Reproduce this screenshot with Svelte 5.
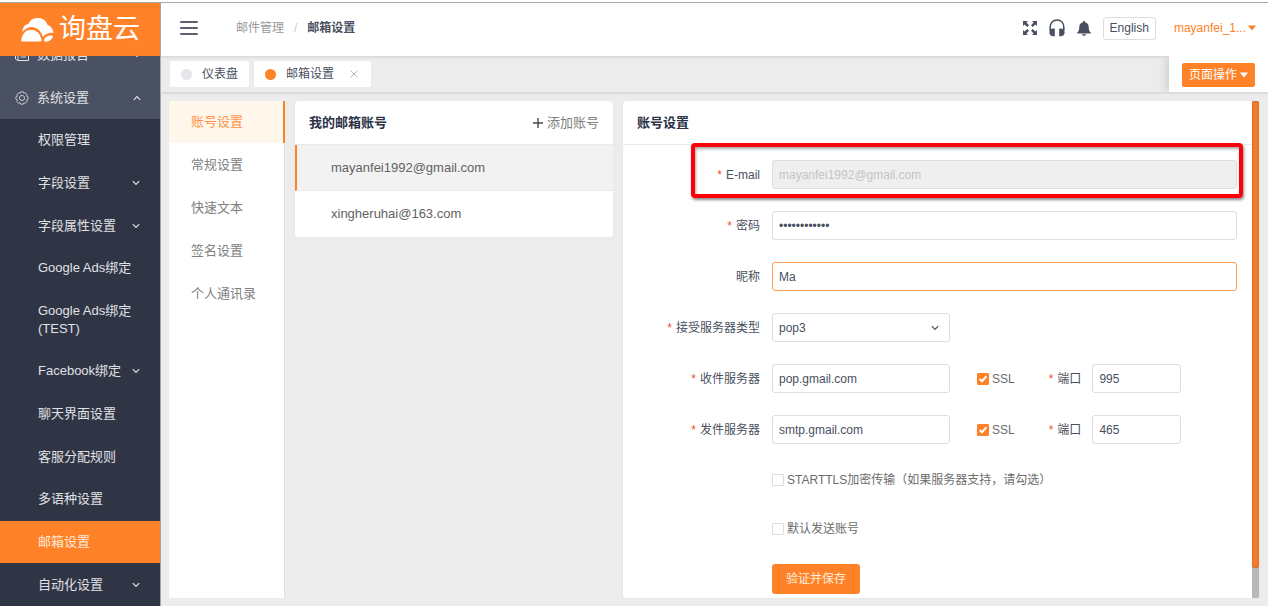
<script>
  const settingsMenu = [
    { label: '权限管理' },
    { label: '字段设置', expandable: true },
    { label: '字段属性设置', expandable: true },
    { label: 'Google Ads绑定' },
    { label: 'Google Ads绑定 (TEST)', tall: true },
    { label: 'Facebook绑定', expandable: true },
    { label: '聊天界面设置' },
    { label: '客服分配规则' },
    { label: '多语种设置' },
    { label: '邮箱设置', active: true },
    { label: '自动化设置', expandable: true },
  ];
  const sections = ['账号设置', '常规设置', '快速文本', '签名设置', '个人通讯录'];
  const accounts = ['mayanfei1992@gmail.com', 'xingheruhai@163.com'];

  let password = $state('abcdefghijkl');
  let nickname = $state('Ma');
  let protocol = $state('pop3');
  let servers = $state([
    { id: 'incoming', label: '收件服务器', host: 'pop.gmail.com', ssl: true, port: '995' },
    { id: 'outgoing', label: '发件服务器', host: 'smtp.gmail.com', ssl: true, port: '465' },
  ]);
  let starttls = $state(false);
  let isDefault = $state(false);
</script>

{#snippet chevron(up)}
  <svg class="chevron" class:up width="8" height="6" viewBox="0 0 8 6" aria-hidden="true">
    <path d="M.8 1.200 4 4.400 7.200 1.200" fill="none" stroke="currentColor" stroke-width="1.200" />
  </svg>
{/snippet}

{#snippet caret()}
  <svg width="8" height="6" viewBox="0 0 8 6" aria-hidden="true"><path d="M0 .5h8L4 5.5z" fill="currentColor" /></svg>
{/snippet}

<div class="page">
  <aside>
    <a class="logo" href="#home">
      <svg width="33" height="24" viewBox="0 0 33 24" aria-hidden="true">
        <path d="M1.500 14C1.500 9 4 6.500 7.500 6 9 2 12.500 0 17 0c5 0 8.500 3 9.500 7 3.500 1 5.500 4 6 8-4-.6-8 .8-10.500 4C20 12.500 15.500 9 10.500 9 7 9 4 11 1.500 14z" fill="#fff" />
        <path d="M1.500 23.500C0 23.500 0 22 .5 20.500 2 15 5.500 11.800 10 11.800c5.500 0 9.500 4.200 10.500 10 .2 1.200-.3 1.700-1.500 1.700z" fill="#fff" />
        <path d="M23 22.500c.5-3.500 4-5.500 9-5-.8 4-3.500 6-7 6-1.500 0-2.100-.2-2-1z" fill="#fff" />
      </svg>
      <span>询盘云</span>
    </a>
    <nav class="top-menu">
      <a class="group" href="#report">
        <svg width="14" height="14" viewBox="0 0 14 14" fill="none" stroke="currentColor" aria-hidden="true">
          <path d="M3 1.500h10.500v11H2.500L.5 11V5H3zM3 5v7M5.500 5h5.500M5.500 9h5.500" />
        </svg>
        <span>数据报告</span>
        {@render chevron(false)}
      </a>
      <a class="group" href="#system">
        <svg width="14" height="14" viewBox="0 0 14 14" fill="none" stroke="currentColor" stroke-width=".8" aria-hidden="true">
          <path d="M5.700.8h2.600l.5 1.500 1.600-.5 1.700 1.800-.6 1.500 1.600.8v2.300l-1.600.8.6 1.500-1.700 1.800-1.600-.5-.5 1.400H5.700l-.5-1.400-1.600.5-1.700-1.800.6-1.500L.9 8.200V5.900l1.600-.8-.6-1.500 1.700-1.800 1.600.5z" />
          <circle cx="7" cy="7" r="2.600" />
        </svg>
        <span>系统设置</span>
        {@render chevron(true)}
      </a>
    </nav>
    <nav class="sub-menu">
      {#each settingsMenu as item}
        <a href="#menu" class:active={item.active} class:tall={item.tall}>
          <span>{item.label}</span>
          {#if item.expandable}{@render chevron(false)}{/if}
        </a>
      {/each}
    </nav>
  </aside>

  <div class="main">
    <header>
      <button class="burger" aria-label="菜单"><i></i><i></i><i></i></button>
      <div class="crumbs">
        <a href="#mail">邮件管理</a><em>/</em><strong>邮箱设置</strong>
      </div>
      <div class="tools">
        <button class="icon" aria-label="全屏">
          <svg width="14" height="14" viewBox="0 0 14 14" fill="currentColor" aria-hidden="true">
            <path d="M0 0h5L3.400 1.600 6 4.200 4.200 6 1.600 3.400 0 5zM14 0v5l-1.600-1.600L9.800 6 8 4.200l2.600-2.600L9 0zM0 14V9l1.600 1.600L4.200 8 6 9.800l-2.600 2.600L5 14zM14 14H9l1.600-1.600L8 9.800 9.800 8l2.600 2.600L14 9z" />
          </svg>
        </button>
        <button class="icon" aria-label="客服">
          <svg width="16" height="18" viewBox="0 0 16 18" aria-hidden="true">
            <path d="M1.200 12V8.500C1.200 4 4 1 8 1s6.800 3 6.800 7.500V12" fill="none" stroke="currentColor" stroke-width="1.600" />
            <path d="M5.800 9.500v7.800H4.200C2 17.300.4 15.500.4 13.400S2 9.500 4.200 9.500zM10.200 9.500v7.800h1.600c2.200 0 3.800-1.800 3.800-3.900s-1.600-3.900-3.800-3.900z" fill="currentColor" />
          </svg>
        </button>
        <button class="icon" aria-label="通知">
          <svg width="14" height="15" viewBox="0 0 14 15" fill="currentColor" aria-hidden="true">
            <path d="M7 0c.7 0 1.100.5 1.100 1.200C10.500 1.800 11.700 3.500 11.700 6c0 3 .8 4.500 2.100 5.600V12.500H.2v-.9C1.500 10.500 2.300 9 2.300 6c0-2.500 1.200-4.200 3.600-4.800C5.900.5 6.300 0 7 0zM5 13.200h4c-.2 1.100-1 1.600-2 1.600s-1.800-.5-2-1.600z" />
          </svg>
        </button>
        <button class="lang">English</button>
        <button class="user">mayanfei_1...{@render caret()}</button>
      </div>
    </header>

    <div class="tabs">
      <a class="tab" href="#dashboard"><i class="dot"></i>仪表盘</a>
      <a class="tab" href="#mail-settings">
        <i class="dot on"></i>邮箱设置
        <svg class="close" width="8" height="8" viewBox="0 0 8 8" aria-hidden="true"><path d="M.7.7l6.600 6.600M7.300.7.7 7.300" stroke="#b4b6bb" /></svg>
      </a>
      <div class="page-action"><button>页面操作{@render caret()}</button></div>
    </div>

    <main>
      <nav class="sections">
        {#each sections as name, i}
          <a href="#section" class:active={i === 0}>{name}</a>
        {/each}
      </nav>

      <section class="card accounts">
        <div class="card-head">
          <h2>我的邮箱账号</h2>
          <button class="add">
            <svg width="10" height="10" viewBox="0 0 10 10" aria-hidden="true"><path d="M5 0v10M0 5h10" stroke="#4a4a4a" stroke-width="1.400" /></svg>
            添加账号
          </button>
        </div>
        {#each accounts as account, i}
          <a href="#account" class="account" class:active={i === 0}>{account}</a>
        {/each}
      </section>

      <section class="card settings">
        <div class="body">
          <div class="card-head"><h2>账号设置</h2></div>
          <form onsubmit={(e) => e.preventDefault()}>
            <div class="row">
              <label class="req" for="email">E-mail</label>
              <input id="email" type="text" value="mayanfei1992@gmail.com" disabled />
              <div class="highlight"></div>
            </div>
            <div class="row">
              <label class="req" for="password">密码</label>
              <input id="password" type="password" bind:value={password} />
            </div>
            <div class="row">
              <label for="nickname">昵称</label>
              <input id="nickname" class="focused" type="text" bind:value={nickname} />
            </div>
            <div class="row">
              <label class="req" for="protocol">接受服务器类型</label>
              <div class="select">
                <select id="protocol" bind:value={protocol}>
                  <option>pop3</option>
                  <option>imap</option>
                </select>
                {@render chevron(false)}
              </div>
            </div>
            {#each servers as server}
              <div class="row">
                <label class="req" for={server.id}>{server.label}</label>
                <div class="server">
                  <input class="host" id={server.id} type="text" bind:value={server.host} />
                  <label class="check">
                    <span class="box">
                      <input type="checkbox" bind:checked={server.ssl} />
                      <svg width="12" height="12" viewBox="0 0 12 12" aria-hidden="true"><path d="M2.800 6 5 8.200 9.300 3.400" fill="none" stroke="#fff" stroke-width="2" /></svg>
                    </span>
                    SSL
                  </label>
                  <label class="req port-label" for="{server.id}-port">端口</label>
                  <input class="port" id="{server.id}-port" type="text" bind:value={server.port} />
                </div>
              </div>
            {/each}
            <div class="row option">
              <label class="check">
                <span class="box"><input type="checkbox" bind:checked={starttls} /></span>
                STARTTLS加密传输（如果服务器支持，请勾选）
              </label>
            </div>
            <div class="row option">
              <label class="check">
                <span class="box"><input type="checkbox" bind:checked={isDefault} /></span>
                默认发送账号
              </label>
            </div>
            <div class="row option"><button class="save">验证并保存</button></div>
          </form>
        </div>
        <div class="scrollbar"><i></i></div>
      </section>
    </main>
  </div>
</div>

<style>
  :global(body) {
    margin: 0;
  }
  .page,
  .page * {
    box-sizing: border-box;
  }
  .page {
    display: flex;
    min-height: calc(100vh - 2px);
    margin-top: 2px;
    border-top: 1px solid #a9a9ab;
    background: #ececec;
    color: #495060;
    font: 12px/18px 'Liberation Sans', 'Noto Sans CJK SC', sans-serif;
  }
  a {
    color: inherit;
    text-decoration: none;
  }
  button,
  input,
  select {
    font: inherit;
    color: inherit;
  }
  button {
    display: flex;
    align-items: center;
    padding: 0;
    border: 0;
    background: none;
    cursor: pointer;
  }
  svg {
    flex: none;
  }
  .chevron.up {
    transform: scaleY(-1);
  }

  aside {
    display: flex;
    flex: none;
    flex-direction: column;
    width: 161px;
    border-right: 1px solid #a3a5aa;
    background: #2f3545;
    color: #e0e1e5;
    font-size: 13px;
  }
  .logo {
    position: relative;
    z-index: 1;
    display: flex;
    align-items: center;
    gap: 5px;
    height: 53px;
    padding-left: 21px;
    background: #ff8229;
    color: #fff;
    font-size: 27px;
    line-height: 53px;
  }
  .top-menu {
    margin-top: -23px;
    background: #4a5163;
  }
  .group {
    display: flex;
    align-items: center;
    height: 43px;
    padding: 0 19px 0 15px;
  }
  .group span {
    flex: 1;
    margin-left: 8px;
  }
  .sub-menu {
    display: flex;
    flex: 1;
    flex-direction: column;
  }
  .sub-menu a {
    display: flex;
    flex: 1 0 42px;
    align-items: center;
    justify-content: space-between;
    padding: 0 20px 0 38px;
  }
  .sub-menu .tall {
    flex: none;
    height: 60px;
  }
  .sub-menu .active {
    background: #ff8229;
    color: #ffeada;
  }

  .main {
    display: flex;
    flex: 1;
    flex-direction: column;
    min-width: 0;
  }
  header {
    display: flex;
    align-items: center;
    height: 53px;
    padding: 0 12px 3px 19px;
    background: #fff;
  }
  .burger {
    flex-direction: column;
    gap: 4px;
    width: 18px;
    margin-right: 38px;
  }
  .burger i {
    width: 18px;
    height: 2px;
    border-radius: 1px;
    background: #5a6173;
  }
  .crumbs {
    display: flex;
    gap: 10px;
    color: #999;
  }
  .crumbs em {
    color: #ccc;
    font-style: normal;
  }
  .crumbs strong {
    color: #495060;
  }
  .tools {
    display: flex;
    align-items: center;
    margin-left: auto;
  }
  .icon {
    margin-right: 12px;
  }
  .lang {
    height: 23px;
    margin-right: 18px;
    padding: 0 6px;
    border: 1px solid #dcdee2;
    border-radius: 3px;
  }
  .user {
    gap: 2px;
    color: #ff8229;
  }

  .tabs {
    display: flex;
    align-items: center;
    gap: 5px;
    height: 37px;
    padding-left: 9px;
    border-bottom: 1px solid #dadada;
    background: #ececec;
    box-shadow:
      inset 0 2px 2px #dcdcdc,
      0 1px 1px #dedede;
  }
  .tab {
    display: flex;
    align-items: center;
    height: 26px;
    padding: 0 11px;
    border-radius: 2px;
    background: #fff;
  }
  .dot {
    width: 11px;
    height: 11px;
    margin-right: 10px;
    border-radius: 50%;
    background: #e4e6ea;
  }
  .dot.on {
    background: #ff8229;
  }
  .close {
    margin: 0 2px 0 16px;
  }
  .page-action {
    display: flex;
    align-items: center;
    align-self: stretch;
    margin-left: auto;
    padding: 2px 13px 0;
    background: #fff;
    box-shadow: -3px 0 8px #cfcfcf;
    clip-path: inset(0 0 0 -14px);
  }
  .page-action button {
    gap: 3px;
    height: 24px;
    padding: 0 7px;
    border-radius: 2px;
    background: #ff8229;
    color: #fff;
  }

  main {
    display: grid;
    flex: 1;
    grid-template-columns: 116px 1fr 2fr;
    gap: 10px;
    padding: 8px 9px 8px 8px;
  }
  .sections {
    border-right: 1px solid #dfe0e4;
    background: #fff;
  }
  .sections a {
    display: flex;
    align-items: center;
    height: 43px;
    padding-left: 22px;
    color: #808080;
    font-size: 13px;
  }
  .sections .active {
    height: 42px;
    margin-right: -1px;
    border-right: 2px solid #ff8229;
    background: #fff6ec;
    color: #ff9447;
  }
  .card {
    border-radius: 3px;
    background: #fff;
    box-shadow: 0 0 1px #d4d4d8;
  }
  .card-head {
    display: flex;
    align-items: center;
    justify-content: space-between;
    height: 44px;
    padding: 0 14px;
    border-bottom: 1px solid #e8eaec;
    font-size: 13px;
  }
  h2 {
    margin: 0;
    color: #2a3147;
    font-size: 13px;
    line-height: 18px;
  }
  .add {
    gap: 4px;
    color: #808080;
  }
  .accounts {
    align-self: start;
    overflow: hidden;
  }
  .account {
    display: flex;
    align-items: center;
    height: 46px;
    padding-left: 36px;
    color: #626262;
    font-size: 13px;
  }
  .account.active {
    padding-left: 34px;
    border-bottom: 1px solid #e8eaec;
    border-left: 2px solid #ff8229;
    background: #f2f2f2;
  }

  .settings {
    display: flex;
  }
  .body {
    flex: 1;
    min-width: 0;
  }
  form {
    display: grid;
    gap: 22px;
    padding: 15px 15px 2px 0;
  }
  .row {
    position: relative;
    display: grid;
    grid-template-columns: 137px 1fr;
    column-gap: 12px;
    align-items: center;
    height: 29px;
  }
  .row > label {
    text-align: right;
  }
  .req::before {
    content: '*';
    margin-right: 4px;
    color: #f0512c;
  }
  input[type='text'],
  input[type='password'],
  select {
    width: 100%;
    height: 29px;
    padding: 0 6px;
    border: 1px solid #dcdee2;
    border-radius: 3px;
    outline: 0;
    background: #fff;
  }
  input[type='text']:disabled {
    background: #efefef;
    color: #c3c4c8;
  }
  input[type='text'].focused {
    border-color: #ff9d57;
  }
  .highlight {
    position: absolute;
    inset: -17px -6px -9px 68px;
    border: 4px solid #fb0007;
    border-radius: 4px;
    box-shadow:
      1px 2px 3px #8a8a8a,
      inset 1px 2px 3px #a8a8a8;
    pointer-events: none;
  }
  .select {
    display: grid;
    width: 178px;
    align-items: center;
  }
  .select > :global(*) {
    grid-area: 1 / 1;
  }
  .select .chevron {
    justify-self: end;
    margin-right: 11px;
    pointer-events: none;
  }
  select {
    appearance: none;
  }
  .server {
    display: flex;
    align-items: center;
  }
  .server .host {
    width: 178px;
    margin-right: 27px;
  }
  .server .port {
    width: 89px;
  }
  .port-label {
    margin: 0 11px 0 34px;
  }
  .check {
    display: flex;
    align-items: center;
    gap: 3px;
    color: #6c6c6c;
  }
  .box {
    display: grid;
  }
  .box > :global(*) {
    grid-area: 1 / 1;
  }
  .box svg {
    pointer-events: none;
  }
  .box input {
    appearance: none;
    width: 12px;
    height: 12px;
    margin: 0;
    border: 1px solid #dcdee2;
    border-radius: 1px;
    background: #fff;
  }
  .box input:checked {
    border-color: #ff8229;
    background: #ff8229;
  }
  .option {
    height: 27px;
  }
  .row.option > * {
    grid-column: 2;
    justify-self: start;
    text-align: left;
  }
  .save {
    align-self: start;
    height: 30px;
    padding: 0 14px;
    border-radius: 3px;
    background: #ff8229;
    color: #ffeedf;
  }
  .scrollbar {
    flex: none;
    width: 7px;
    background: #b8b8b8;
  }
  .scrollbar i {
    display: block;
    height: 94%;
    border-radius: 3px;
    background: #f47b29;
    box-shadow: inset 0 0 2px #b85a1c;
  }
</style>
